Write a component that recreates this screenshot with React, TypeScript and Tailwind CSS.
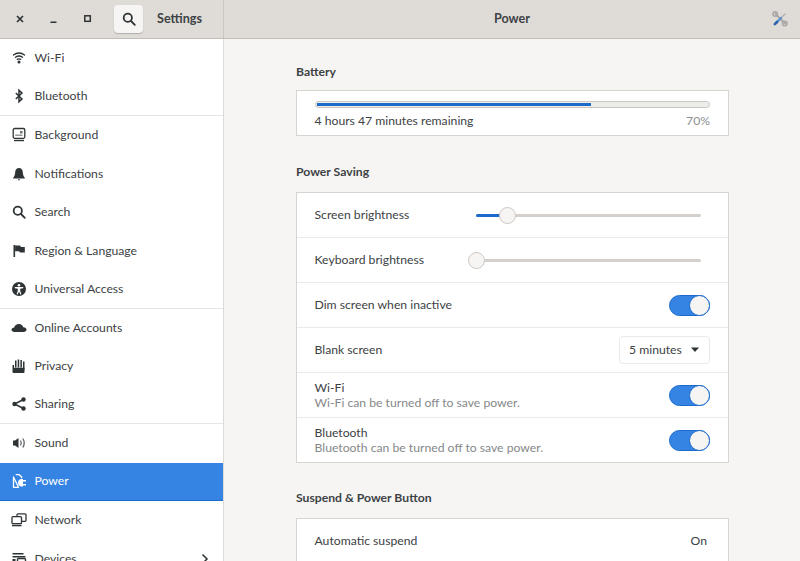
import React from "react";

const D = "#2e3436";

function Ic({ children, color = D }: { children: React.ReactNode; color?: string }) {
  return (
    <svg width="16" height="16" viewBox="0 0 16 16" fill={color} stroke="none" className="shrink-0">
      {children}
    </svg>
  );
}

const icons: Record<string, (c: string) => React.ReactNode> = {
  wifi: (c) => (
    <g fill="none" stroke={c} strokeWidth="1.300" strokeLinecap="round">
      <path d="M2.500 5c3.200-2.700 7.800-2.700 11 0" />
      <path d="M4.500 7.300c2.100-1.600 4.900-1.600 7 0" />
      <path d="M6.300 9.400c1-.7 2.400-.7 3.400 0" />
      <circle cx="8" cy="12" r=".9" fill={c} />
    </g>
  ),
  bluetooth: (c) => (
    <path d="M4.800 5 11 10.900 8 13.800V2.200l3 2.900-6.200 5.900" fill="none" stroke={c} strokeWidth="1.500" />
  ),
  background: (c) => (
    <g>
      <rect x="2.200" y="1.500" width="11.600" height="9.800" rx="1.500" fill="none" stroke={c} strokeWidth="1.300" />
      <rect x="9" y="4" width="2.500" height="2.500" fill={c} opacity=".7" />
      <rect x="4.200" y="7.500" width="7.300" height="1.500" fill={c} opacity=".5" />
      <rect x="3" y="12.800" width="10" height="1.400" fill={c} />
    </g>
  ),
  bell: (c) => (
    <g>
      <path d="M8 2C5.600 2 4.300 3.800 4.200 6c-.1 2.800-.9 4.500-2 5.700v.8h11.600v-.8c-1.100-1.200-1.900-2.900-2-5.700C11.700 3.800 10.400 2 8 2z" fill={c} />
      <rect x="7" y="13.200" width="2" height="1.100" rx=".5" fill={c} />
    </g>
  ),
  search: (c) => (
    <g fill="none" stroke={c} strokeWidth="1.800" strokeLinecap="round">
      <circle cx="6.800" cy="6.800" r="4.100" />
      <path d="M10 10l3.800 3.800" />
    </g>
  ),
  flag: (c) => (
    <g>
      <rect x="2.500" y="2" width="1.600" height="12" fill={c} />
      <path d="M4.100 2.500H9l1 1.500h3.800v5.500H9l-1-1.300H4.100z" fill={c} />
    </g>
  ),
  access: (c) => (
    <g>
      <circle cx="8" cy="8" r="7" fill={c} />
      <circle cx="8" cy="4.300" r="1.300" fill="#fff" />
      <path d="M3.800 6h8.400v1.200l-3 .6v2l1.200 3.400-1.100.4L8 10.500l-1.300 3.100-1.100-.4 1.200-3.400v-2l-3-.6z" fill="#fff" />
    </g>
  ),
  cloud: (c) => (
    <path d="M3.500 12C1.500 12 .5 11 .5 9.800.5 8.500 1.800 7.500 3.200 7.500 3.700 5.300 5.500 4 7.800 4c2.400 0 4 1.300 4.500 3.200 1.900 0 3.200 1.200 3.200 2.600 0 1.300-1.300 2.200-3 2.200z" fill={c} />
  ),
  hand: (c) => (
    <g>
      <rect x="4" y="2.500" width="1.500" height="7" fill={c} />
      <rect x="6.700" y="1.500" width="1.500" height="8" fill={c} />
      <rect x="9.400" y="2" width="1.500" height="7.500" fill={c} />
      <rect x="12" y="3.500" width="1.500" height="8" fill={c} />
      <path d="M1.500 7H3v2.700h10.500V14a1 1 0 0 1-1 1h-10a1 1 0 0 1-1-1z" fill={c} />
    </g>
  ),
  share: (c) => (
    <g>
      <path d="M12.500 3.500 3.500 8l9 4.500" fill="none" stroke={c} strokeWidth="1.500" />
      <circle cx="12.500" cy="3.500" r="2.200" fill={c} />
      <circle cx="3.500" cy="8" r="2.200" fill={c} />
      <circle cx="12.500" cy="12.500" r="2.200" fill={c} />
    </g>
  ),
  sound: (c) => (
    <g>
      <path d="M2 5.500h2L7.500 3v10L4 10.500H2z" fill={c} />
      <path d="M9.500 5.500c.9 1.500.9 3.500 0 5M11.800 3.500c1.700 2.700 1.700 6.300 0 9" fill="none" stroke={c} strokeWidth="1.300" opacity=".75" />
    </g>
  ),
  power: (c) => (
    <g>
      <path d="M4.700 1.700h3.600l2.300 2.300V5.200M7.500 14.300H2.500V4z" fill="none" stroke={c} strokeWidth="1.300" strokeLinejoin="round" />
      <path d="M7 9.800c0-2.300 1.500-3.800 3.500-3.800H12v7.600h-1.500C8.500 13.600 7 12.100 7 9.800z" fill={c} />
      <rect x="12" y="7" width="3" height="1.500" fill={c} />
      <rect x="12" y="11" width="3" height="1.500" fill={c} />
    </g>
  ),
  network: (c) => (
    <g>
      <rect x="6" y="1.800" width="9" height="7.500" rx="1" fill="none" stroke={c} strokeWidth="1.300" />
      <rect x="1" y="4.700" width="9.500" height="7" rx="1" fill="#fff" stroke={c} strokeWidth="1.300" />
      <rect x="1" y="12.800" width="9.500" height="1.500" fill={c} />
    </g>
  ),
  devices: (c) => (
    <g>
      <rect x="1.500" y="2" width="11" height="1.500" fill={c} />
      <rect x="1.500" y="5" width="13" height="1.500" fill={c} />
      <rect x="6.500" y="7.500" width="8" height="7" rx="1" fill="none" stroke={c} strokeWidth="1.400" />
      <rect x="1.500" y="8" width="3" height="6" fill={c} />
    </g>
  ),
};

type Item = { n: string; i: string; sep?: boolean; active?: boolean; arrow?: boolean };
const items: Item[] = [
  { n: "Wi-Fi", i: "wifi" },
  { n: "Bluetooth", i: "bluetooth", sep: true },
  { n: "Background", i: "background" },
  { n: "Notifications", i: "bell" },
  { n: "Search", i: "search" },
  { n: "Region & Language", i: "flag" },
  { n: "Universal Access", i: "access", sep: true },
  { n: "Online Accounts", i: "cloud" },
  { n: "Privacy", i: "hand" },
  { n: "Sharing", i: "share", sep: true },
  { n: "Sound", i: "sound" },
  { n: "Power", i: "power", active: true },
  { n: "Network", i: "network" },
  { n: "Devices", i: "devices", arrow: true },
];

function Row({ it }: { it: Item }) {
  const c = it.active ? "#ffffff" : D;
  return (
    <div
      className={
        "flex h-[38.5px] shrink-0 items-center pl-[11px] pr-[12px] " +
        (it.active ? "border-b border-[#1b6acb] bg-[#3584e4] text-white " : "text-[#3d4244] ") +
        (it.sep ? "border-b border-[#e6e5e3]" : "")
      }
    >
      <Ic color={c}>{icons[it.i](c)}</Ic>
      <span className="ml-[7.500px] text-[12.200px]">{it.n}</span>
      {it.arrow && (
        <svg width="12" height="12" viewBox="0 0 12 12" className="ml-auto" fill="none" stroke={D} strokeWidth="1.500">
          <path d="M3.500 1.500 8 6l-4.500 4.500" />
        </svg>
      )}
    </div>
  );
}

function Toggle() {
  return (
    <div className="flex h-[21px] w-[41px] items-center justify-end rounded-full border border-[#1b6acb] bg-[#3584e4]">
      <div className="-mr-px h-[21px] w-[21px] rounded-full border border-[#1b6acb] bg-[#f6f5f4]" />
    </div>
  );
}

function SRow({ children, last }: { children: React.ReactNode; last?: boolean }) {
  return (
    <div className={"flex items-center pl-[17.500px] pr-[18px] " + (last ? "h-[44px]" : "h-[45px] border-b border-[#ebeae8]")}>
      {children}
    </div>
  );
}

function SliderTrack({ pct, thumb }: { pct: number; thumb: number }) {
  return (
    <div className="relative ml-auto mr-[9px] h-[3px] w-[225px] rounded-full bg-[#d5d0cc]">
      <div className="h-full rounded-full bg-[#1b6acb]" style={{ width: `${pct}px` }} />
      <div
        className="absolute top-[-7px] h-[17px] w-[17px] rounded-full border border-[#cdc7c2] bg-[#f6f5f4]"
        style={{ left: `${thumb}px` }}
      />
    </div>
  );
}

export default function App() {
  return (
    <div
      className="flex h-[561px] w-[800px] flex-col overflow-hidden bg-[#f6f5f4] text-[12.200px] text-[#3d4244]"
      style={{ fontFamily: "Lato, sans-serif" }}
    >
      <header className="flex h-[39px] shrink-0 border-b border-[#c3bdb8] bg-[#dfdcd8]">
        <div className="flex w-[224px] shrink-0 items-center border-r border-[#cdc7c2]">
          <div className="flex w-[37px] justify-center pl-[2px]">
            <svg width="12" height="12" viewBox="0 0 12 12" fill="none" stroke={D} strokeWidth="1.700">
              <path d="M3 3l6 6M9 3l-6 6" />
            </svg>
          </div>
          <div className="flex w-[34px] justify-center">
            <svg width="12" height="12" viewBox="0 0 12 12" fill={D}>
              <rect x="2.500" y="8.500" width="6" height="1.500" />
            </svg>
          </div>
          <div className="flex w-[34px] justify-center">
            <svg width="12" height="12" viewBox="0 0 12 12" fill="none" stroke={D} strokeWidth="1.500">
              <rect x="2.800" y="2.800" width="5.500" height="5.500" />
            </svg>
          </div>
          <div className="ml-[9px] flex h-[28px] w-[29px] items-center justify-center rounded-[4px] bg-[#f6f5f4] shadow-[0_1px_1px_rgba(0,0,0,0.2)]">
            <Ic>{icons.search(D)}</Ic>
          </div>
          <span className="ml-[14px] text-[12.600px] font-bold text-[#3d4244]">Settings</span>
        </div>
        <div className="relative flex flex-1 items-center justify-center">
          <span className="text-[12.600px] font-bold">Power</span>
          <svg width="16" height="16" viewBox="0 0 16 16" className="absolute right-[12px] top-[11px]">
            <path d="M3.500 3 13 12.500" stroke="#a8a7a4" strokeWidth="2" strokeLinecap="round" />
            <path d="M9 7 13 3" stroke="#b5b4b1" strokeWidth="1.600" strokeLinecap="round" />
            <path d="M4 12 9 7" stroke="#5b8fd0" strokeWidth="2.400" strokeLinecap="round" />
            <path d="M2.800 13.200 5 11" stroke="#2b62a8" strokeWidth="2.600" strokeLinecap="round" />
            <circle cx="12.800" cy="12.500" r="2.300" fill="none" stroke="#a8a7a4" strokeWidth="1.500" />
            <circle cx="3.200" cy="3" r="2.300" fill="none" stroke="#a8a7a4" strokeWidth="1.500" />
          </svg>
        </div>
      </header>
      <div className="flex min-h-0 flex-1">
        <aside className="flex w-[224px] shrink-0 flex-col overflow-hidden border-r border-[#dedbd7] bg-white">
          {items.map((it) => (
            <Row key={it.n} it={it} />
          ))}
        </aside>
        <main className="min-w-0 flex-1 overflow-hidden pl-[72px] pt-[24px]">
          <div className="w-[433px]">
            <h2 className="mb-[9px] h-[18px] font-bold leading-[18px]">Battery</h2>
            <section className="h-[46px] border border-[#d8d4d0] bg-white pl-[17.500px] pr-[18px] pt-[10px]">
              <div className="h-[7px] rounded-full border border-[#cdc7c2] bg-[#ececeb] p-px">
                <div className="h-full w-[70%] bg-[#1b6acb]" />
              </div>
              <div className="mt-[4px] flex justify-between leading-[17px]">
                <span>4 hours 47 minutes remaining</span>
                <span className="text-[#8b8e8f]">70%</span>
              </div>
            </section>
            <h2 className="mb-[11px] mt-[27px] h-[18px] font-bold leading-[18px]">Power Saving</h2>
            <section className="border border-[#d8d4d0] bg-white">
              <SRow>
                <span>Screen brightness</span>
                <SliderTrack pct={32} thumb={23} />
              </SRow>
              <SRow>
                <span>Keyboard brightness</span>
                <SliderTrack pct={0} thumb={-8} />
              </SRow>
              <SRow>
                <span>Dim screen when inactive</span>
                <div className="ml-auto">
                  <Toggle />
                </div>
              </SRow>
              <SRow>
                <span>Blank screen</span>
                <div className="ml-auto flex h-[28px] w-[91px] items-center rounded-[4px] border border-[#ebeae8] pl-[9px] pr-[9px]">
                  <span>5 minutes</span>
                  <svg width="10" height="6" viewBox="0 0 10 6" fill={D} className="ml-auto">
                    <path d="M1 .5h8L5 5z" />
                  </svg>
                </div>
              </SRow>
              <SRow>
                <div className="leading-[15px]">
                  <div>Wi-Fi</div>
                  <div className="text-[#85888a]">Wi-Fi can be turned off to save power.</div>
                </div>
                <div className="ml-auto">
                  <Toggle />
                </div>
              </SRow>
              <SRow last>
                <div className="leading-[15px]">
                  <div>Bluetooth</div>
                  <div className="text-[#85888a]">Bluetooth can be turned off to save power.</div>
                </div>
                <div className="ml-auto">
                  <Toggle />
                </div>
              </SRow>
            </section>
            <h2 className="mb-[11px] mt-[26px] h-[18px] font-bold leading-[18px]">Suspend &amp; Power Button</h2>
            <section className="border border-[#d8d4d0] bg-white">
              <div className="flex h-[45px] items-center pl-[17.500px] pr-[21px]">
                <span>Automatic suspend</span>
                <span className="ml-auto">On</span>
              </div>
            </section>
          </div>
        </main>
      </div>
    </div>
  );
}
